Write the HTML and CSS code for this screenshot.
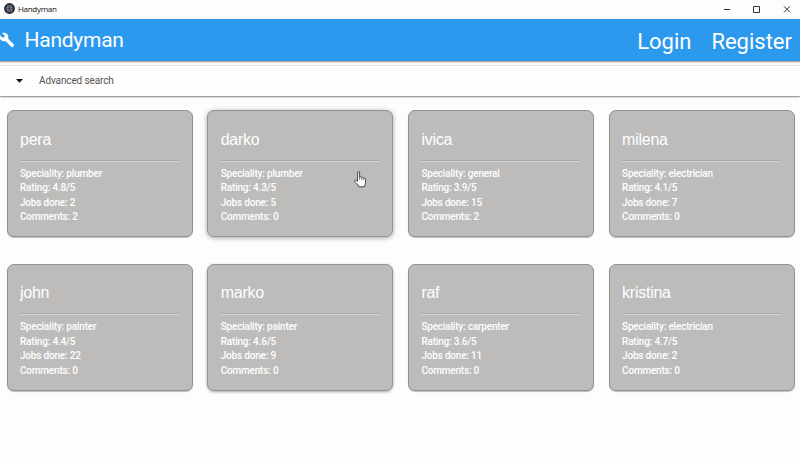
FILE: index.html
```html
<!DOCTYPE html>
<html lang="en">
<head>
<meta charset="utf-8">
<title>Handyman</title>
<link rel="stylesheet" href="styles.css">
</head>
<body>
<div class="titlebar">
  <svg class="app-icon" viewBox="0 0 11 11"><circle cx="5.5" cy="5.5" r="5.4" fill="#20242f"/><g fill="none" stroke="#929ba8" stroke-width=".55"><ellipse cx="5.5" cy="5.5" rx="3.8" ry="1.5"/><ellipse cx="5.5" cy="5.5" rx="3.8" ry="1.5" transform="rotate(60 5.5 5.5)"/><ellipse cx="5.5" cy="5.5" rx="3.8" ry="1.5" transform="rotate(120 5.5 5.5)"/></g></svg>
  <span class="app-name">Handyman</span>
  <div class="window-buttons">
    <svg viewBox="0 0 8 8"><path d="M.8 4.500H7.200"/></svg>
    <svg viewBox="0 0 8 8"><path d="M.5 1.500H6.500V7.500H.5Z"/></svg>
    <svg viewBox="0 0 8 8"><path d="M1 1.300L7 7.300M7 1.300L1 7.300"/></svg>
  </div>
</div>
<header class="toolbar">
  <svg class="wrench" viewBox="0 0 24 24"><path fill="#fff" d="M22.700 19l-9.100-9.100c.9-2.300.4-5-1.500-6.900-2-2-5-2.400-7.400-1.300L9 6 6 9 1.600 4.700C.4 7.100.9 10.100 2.900 12.100c1.900 1.900 4.600 2.400 6.900 1.500l9.100 9.100c.4.4 1 .4 1.400 0l2.300-2.300c.5-.4.5-1.100.1-1.400z"/></svg>
  <span class="brand">Handyman</span>
  <nav class="links"><a>Login</a><a>Register</a></nav>
</header>
<section class="search">
  <svg class="caret" viewBox="0 0 7 4"><path d="M0 0H7L3.500 3.800Z"/></svg>
  <span>Advanced search</span>
</section>
<main class="cards">
  <article class="card"><h2>pera</h2><hr><p>Speciality: plumber</p><p>Rating: 4.8/5</p><p>Jobs done: 2</p><p>Comments: 2</p></article>
  <article class="card hovered"><h2>darko</h2><hr><p>Speciality: plumber</p><p>Rating: 4.3/5</p><p>Jobs done: 5</p><p>Comments: 0</p></article>
  <article class="card"><h2>ivica</h2><hr><p>Speciality: general</p><p>Rating: 3.9/5</p><p>Jobs done: 15</p><p>Comments: 2</p></article>
  <article class="card"><h2>milena</h2><hr><p>Speciality: electrician</p><p>Rating: 4.1/5</p><p>Jobs done: 7</p><p>Comments: 0</p></article>
  <article class="card"><h2>john</h2><hr><p>Speciality: painter</p><p>Rating: 4.4/5</p><p>Jobs done: 22</p><p>Comments: 0</p></article>
  <article class="card leaving"><h2>marko</h2><hr><p>Speciality: painter</p><p>Rating: 4.6/5</p><p>Jobs done: 9</p><p>Comments: 0</p></article>
  <article class="card"><h2>raf</h2><hr><p>Speciality: carpenter</p><p>Rating: 3.6/5</p><p>Jobs done: 11</p><p>Comments: 0</p></article>
  <article class="card"><h2>kristina</h2><hr><p>Speciality: electrician</p><p>Rating: 4.7/5</p><p>Jobs done: 2</p><p>Comments: 0</p></article>
</main>
<svg class="pointer" viewBox="0 0 12 17"><path d="M3.600 9.200V2Q3.600.7 4.600.7T5.600 2V6Q7.300 5 7.700 6.500Q9.200 5.800 9.600 7.100Q11.500 6.700 11.500 8.400V11.500Q11.500 13.600 10.300 15.800H4.800Q4.300 14 2.900 12.700L.8 10.500Q.3 9.400 1.400 9.200Q2.300 9 3.600 10.400Z" fill="#fff" stroke="#333" stroke-width=".9"/><path d="M5.600 6V8.800M7.700 6.700V9M9.600 7.300V9.200" stroke="#444" stroke-width=".7" fill="none"/></svg>
</body>
</html>
```
FILE: styles.css
```css
* { box-sizing: border-box; }
body {
  margin: 0;
  height: 464px;
  overflow: hidden;
  background: #fefdfc;
  font-family: Roboto, sans-serif;
}
.titlebar {
  height: 19px;
  display: flex;
  align-items: center;
  padding: 0 9px 2px 4px;
}
.app-icon { width: 11px; height: 11px; }
.app-name {
  margin-left: 3px;
  font: 8px/12px "Open Sans", sans-serif;
  letter-spacing: -.3px;
  color: #111;
}
.window-buttons { display: flex; gap: 22px; margin-left: auto; }
.window-buttons svg {
  width: 8px;
  height: 8px;
  fill: none;
  stroke: #333;
  stroke-width: 1;
}
.toolbar {
  position: relative;
  height: 42px;
  display: flex;
  align-items: center;
  padding-right: 8px;
  background: #2b99ed;
  color: #fff;
  box-shadow: 0 1px 1.500px rgba(0, 0, 0, .45);
}
.wrench { width: 16px; height: 16px; margin-left: -1px; }
.brand { margin-left: 9.500px; font-size: 21px; letter-spacing: -.25px; line-height: 26px; }
.links {
  display: flex;
  gap: 20px;
  margin-left: auto;
  padding-top: 3px;
  font-size: 22px;
  line-height: 26px;
}
.search {
  height: 30px;
  margin-top: 5px;
  display: flex;
  align-items: center;
  padding: 0 0 1px 16px;
  color: #555;
  font-size: 10px;
  letter-spacing: -.12px;
  box-shadow: 0 1px 1.500px rgba(0, 0, 0, .5), 0 -1px 1px rgba(0, 0, 0, .08);
}
.caret { width: 7px; height: 4px; margin-right: 16px; fill: #111; }
.cards {
  display: grid;
  grid-template-columns: repeat(4, 186px);
  grid-auto-rows: 127px;
  gap: 26.600px 14.700px;
  padding: 14.400px 0 0 6.500px;
}
.card {
  padding: 18.500px 12.500px 0;
  border: 1px solid #929291;
  border-radius: 7px;
  background: #bdbcbb;
  color: #fff;
  box-shadow: 0 1px 1px rgba(0, 0, 0, .25);
}
.hovered { box-shadow: 0 1px 5px rgba(0, 0, 0, .35); }
.leaving { box-shadow: 0 1px 3px rgba(0, 0, 0, .35); }
.card h2 {
  margin: 0;
  font: 400 16px/20px "Liberation Sans", sans-serif;
  letter-spacing: -.25px;
}
.card hr {
  height: 2px;
  margin: 10px 0 5px;
  border: 0;
  border-top: 1px solid #a9a8a7;
  border-bottom: 1px solid #d2d2d1;
}
.card p {
  margin: 0;
  font-size: 10px;
  font-weight: 500;
  letter-spacing: -.19px;
  line-height: 14.350px;
}
.pointer {
  position: absolute;
  left: 354px;
  top: 171px;
  width: 12px;
  height: 17px;
}
```
